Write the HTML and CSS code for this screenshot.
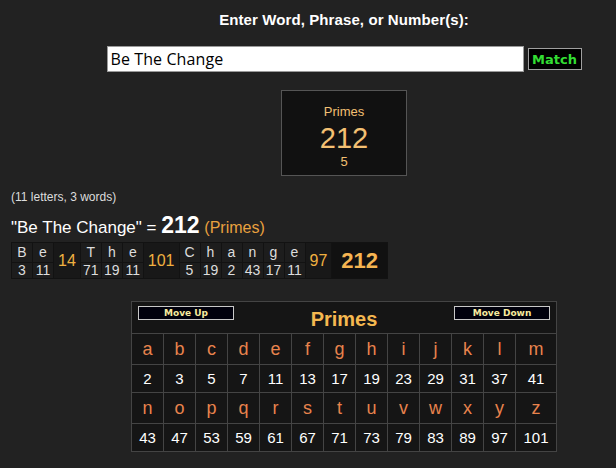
FILE: index.html
```html
<!DOCTYPE html>
<html>
<head>
<meta charset="utf-8">
<link rel="stylesheet" href="styles.css">
</head>
<body>
<div class="center">
  <h1 class="title">Enter Word, Phrase, or Number(s):</h1>
  <div class="entry">
    <input class="phrase" type="text" value="Be The Change">
    <button class="match">Match</button>
  </div>
  <div class="summary">
    <div class="sum-name">Primes</div>
    <div class="sum-value">212</div>
    <div class="sum-reduced">5</div>
  </div>
</div>
<div class="left">
  <div class="counts">(11 letters, 3 words)</div>
  <div class="equation">"Be The Change" = <b class="eq-total">212</b> <span class="eq-cipher">(Primes)</span></div>
  <table class="breakdown">
    <tr class="b-letters">
      <td>B</td><td>e</td><td class="wt" rowspan="2">14</td>
      <td>T</td><td>h</td><td>e</td><td class="wt" rowspan="2">101</td>
      <td>C</td><td>h</td><td>a</td><td>n</td><td>g</td><td>e</td><td class="wt" rowspan="2">97</td>
      <td class="grand" rowspan="2">212</td>
    </tr>
    <tr class="b-values">
      <td>3</td><td>11</td>
      <td>71</td><td>19</td><td>11</td>
      <td>5</td><td>19</td><td>2</td><td>43</td><td>17</td><td>11</td>
    </tr>
  </table>
</div>
<div class="center">
  <table class="chart">
    <tr class="chart-head-row">
      <th colspan="13">
        <div class="chart-head">
          <button class="move">Move Up</button>
          <span class="chart-title">Primes</span>
          <button class="move">Move Down</button>
        </div>
      </th>
    </tr>
    <tr class="c-letters"><td>a</td><td>b</td><td>c</td><td>d</td><td>e</td><td>f</td><td>g</td><td>h</td><td>i</td><td>j</td><td>k</td><td>l</td><td class="wide">m</td></tr>
    <tr class="c-values"><td>2</td><td>3</td><td>5</td><td>7</td><td>11</td><td>13</td><td>17</td><td>19</td><td>23</td><td>29</td><td>31</td><td>37</td><td>41</td></tr>
    <tr class="c-letters"><td>n</td><td>o</td><td>p</td><td>q</td><td>r</td><td>s</td><td>t</td><td>u</td><td>v</td><td>w</td><td>x</td><td>y</td><td>z</td></tr>
    <tr class="c-values"><td>43</td><td>47</td><td>53</td><td>59</td><td>61</td><td>67</td><td>71</td><td>73</td><td>79</td><td>83</td><td>89</td><td>97</td><td>101</td></tr>
  </table>
</div>
</body>
</html>
```
FILE: styles.css
```css
html, body {
  margin: 0;
  padding: 0;
  background: #222222;
  color: #ffffff;
  font-family: "Liberation Sans", Arial, sans-serif;
  overflow: hidden;
}

.center {
  width: 544px;
  margin-left: 72px;
  display: flex;
  flex-direction: column;
  align-items: center;
}

.title {
  margin: 0;
  padding-top: 11px;
  font-size: 15px;
  line-height: 18px;
  font-weight: bold;
  letter-spacing: 0.1px;
  color: #ffffff;
}

.entry {
  margin-top: 17px;
  display: flex;
  align-items: center;
  gap: 4px;
}

.phrase {
  box-sizing: border-box;
  width: 417px;
  height: 26px;
  margin: 0;
  border: 1px solid #9a9a9a;
  padding: 0 3px;
  background: #ffffff;
  color: #000000;
  font-family: "Open Sans", "DejaVu Sans", sans-serif;
  font-size: 16px;
  letter-spacing: 0.1px;
  outline: none;
}

.match {
  box-sizing: border-box;
  width: 54px;
  height: 22px;
  margin: 0;
  padding: 0;
  background: #000000;
  border: 1px solid #a0a0a0;
  color: #33dd33;
  font-family: "DejaVu Sans", sans-serif;
  font-weight: bold;
  font-size: 13px;
}

.summary {
  box-sizing: border-box;
  width: 126px;
  height: 86px;
  margin-top: 18px;
  padding-top: 13px;
  border: 1px solid #555555;
  background: #111111;
  color: #f3c073;
  text-align: center;
}

.sum-name {
  font-size: 13px;
  line-height: 16px;
}

.sum-value {
  margin-top: 2px;
  font-size: 29px;
  line-height: 32px;
}

.sum-reduced {
  font-size: 13px;
  line-height: 16px;
}

.left {
  padding-left: 11px;
}

.counts {
  margin-top: 14px;
  font-size: 12px;
  line-height: 14px;
  color: #dddddd;
}

.equation {
  margin-top: 11px;
  font-size: 17px;
  line-height: 20px;
  color: #ffffff;
}

.eq-total {
  font-size: 23px;
  line-height: 20px;
  font-weight: bold;
}

.eq-cipher {
  font-size: 16px;
  color: #e9a13f;
}

.breakdown {
  margin-top: 4px;
  border-collapse: collapse;
  background: #161616;
}

.breakdown td {
  padding: 0;
  border: 1px solid #121212;
  text-align: center;
  color: #dddddd;
  background: #1d1d1d;
  width: 20px;
  font-size: 14px;
}

.b-letters td {
  height: 19px;
  line-height: 19px;
}

.b-values td {
  height: 15px;
  line-height: 15px;
}

.breakdown td.wt {
  width: auto;
  background: #181818;
  color: #f0b040;
  font-size: 16px;
  padding: 0 4px;
}

.breakdown td.grand {
  width: auto;
  background: #111111;
  color: #f6b552;
  font-size: 22px;
  font-weight: bold;
  padding: 0 9px;
}

.chart {
  margin-top: 22px;
  border-collapse: collapse;
  background: #151515;
  border: 1px solid #444444;
  table-layout: fixed;
}

.chart td, .chart th {
  border: 1px solid #444444;
  padding: 0;
  text-align: center;
  width: 31px;
}

.chart td.wide {
  width: 40px;
}

.chart-head-row th {
  height: 31px;
  vertical-align: top;
}

.chart-head {
  display: grid;
  grid-template-columns: 1fr auto 1fr;
  align-items: start;
  padding: 4px 6px 0 6px;
}

.move {
  box-sizing: border-box;
  width: 96px;
  height: 14px;
  margin: 0;
  padding: 0;
  background: #00000c;
  border: 1px solid #c8c8c8;
  color: #f7eb9e;
  font-family: "DejaVu Sans", sans-serif;
  font-size: 9px;
  font-weight: bold;
  line-height: 12px;
}

.move:last-child {
  justify-self: end;
}

.chart-title {
  margin-top: 2px;
  font-size: 20px;
  line-height: 22px;
  font-weight: bold;
  color: #f5b850;
}

.c-letters td {
  height: 30px;
  font-size: 18px;
  color: #e8834d;
}

.c-values td {
  height: 27px;
  font-size: 15px;
  color: #ffffff;
}
```
